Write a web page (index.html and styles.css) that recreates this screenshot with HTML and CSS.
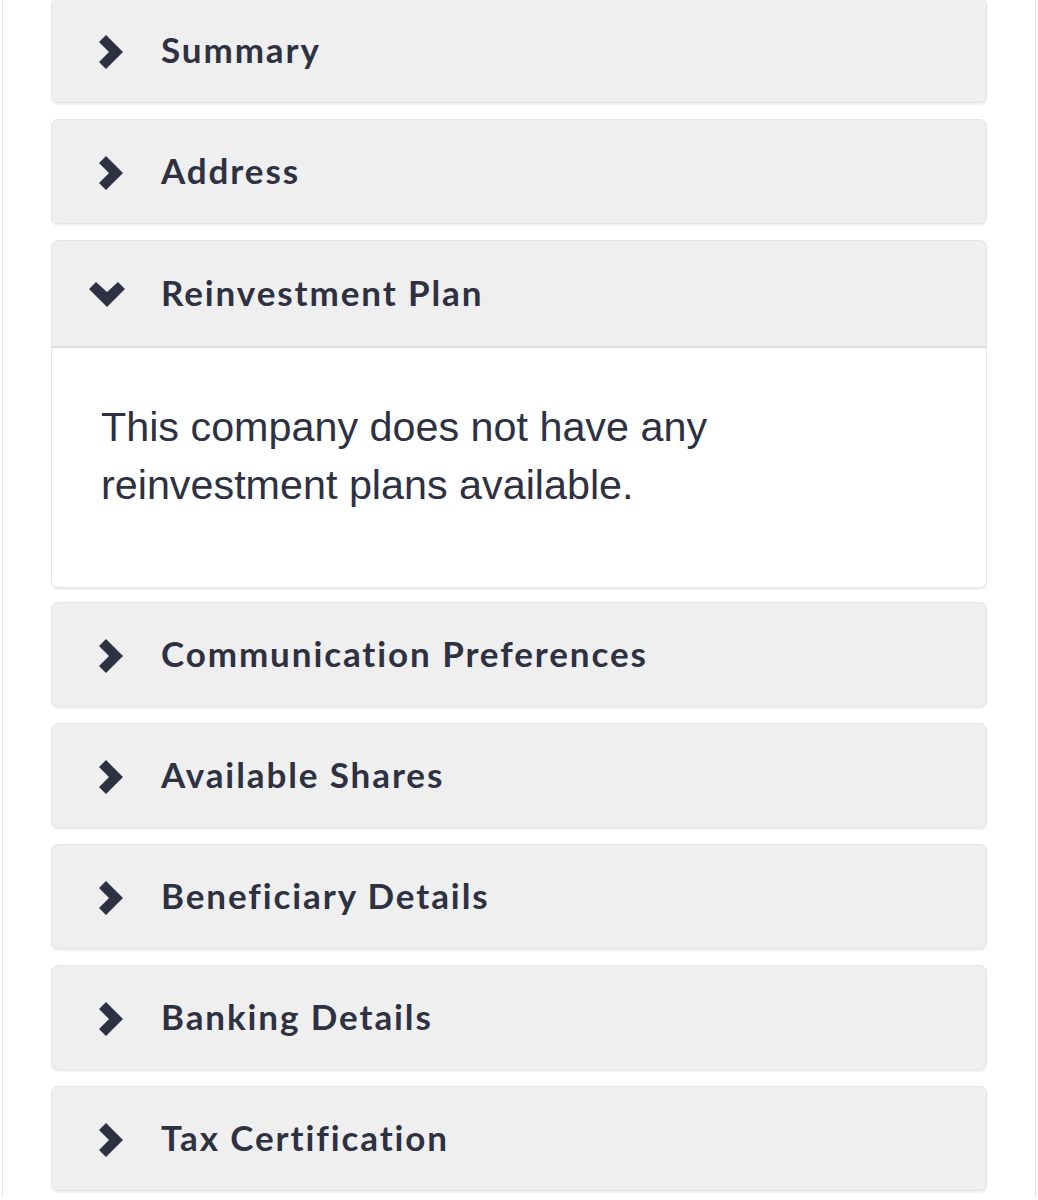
FILE: index.html
```html
<!DOCTYPE html>
<html>
  <head>
    <meta name="viewport" content="width=device-width, initial-scale=1" />
    <link rel="stylesheet" href="styles.css">
  </head>
  <body>
    <div class="page">
      <div class="panel first">
        <div class="panel-head">
          <span class="icon"><svg viewBox="0 0 36 36" width="36" height="36"><polygon points="10,9 17,2 34,19 17,36 10,29 20,19" /></svg></span>
          <span class="title">Summary</span>
        </div>
      </div>

      <div class="panel">
        <div class="panel-head">
          <span class="icon"><svg viewBox="0 0 36 36" width="36" height="36"><polygon points="10,9 17,2 34,19 17,36 10,29 20,19" /></svg></span>
          <span class="title">Address</span>
        </div>
      </div>

      <div class="panel open">
        <div class="panel-head">
          <span class="icon"><svg viewBox="0 0 36 36" width="36" height="36"><polygon points="0,13 7,6 18,16 29,6 36,13 18,31" /></svg></span>
          <span class="title">Reinvestment Plan</span>
        </div>
        <div class="panel-body">
          <p>This company does not have any reinvestment plans available.</p>
        </div>
      </div>

      <div class="panel">
        <div class="panel-head">
          <span class="icon"><svg viewBox="0 0 36 36" width="36" height="36"><polygon points="10,9 17,2 34,19 17,36 10,29 20,19" /></svg></span>
          <span class="title">Communication Preferences</span>
        </div>
      </div>

      <div class="panel">
        <div class="panel-head">
          <span class="icon"><svg viewBox="0 0 36 36" width="36" height="36"><polygon points="10,9 17,2 34,19 17,36 10,29 20,19" /></svg></span>
          <span class="title">Available Shares</span>
        </div>
      </div>

      <div class="panel">
        <div class="panel-head">
          <span class="icon"><svg viewBox="0 0 36 36" width="36" height="36"><polygon points="10,9 17,2 34,19 17,36 10,29 20,19" /></svg></span>
          <span class="title">Beneficiary Details</span>
        </div>
      </div>

      <div class="panel">
        <div class="panel-head">
          <span class="icon"><svg viewBox="0 0 36 36" width="36" height="36"><polygon points="10,9 17,2 34,19 17,36 10,29 20,19" /></svg></span>
          <span class="title">Banking Details</span>
        </div>
      </div>

      <div class="panel">
        <div class="panel-head">
          <span class="icon"><svg viewBox="0 0 36 36" width="36" height="36"><polygon points="10,9 17,2 34,19 17,36 10,29 20,19" /></svg></span>
          <span class="title">Tax Certification</span>
        </div>
      </div>
    </div>
  </body>
</html>
```

FILE: styles.css
```css
* {
  box-sizing: border-box;
}

body {
  margin: 0;
  background-color: white;
  font-family: Lato, "Open Sans", sans-serif;
  color: #2e3142;
}

/* outer column with thin side rules */
.page {
  width: 1034px;
  margin-left: 2px;
  min-height: 1200px;
  padding: 0 48px;
  border-left: 1px solid #e3e3e6;
  border-right: 1px solid #e3e3e6;
}

.panel {
  margin-bottom: 16px;
  border: 1px solid #e4e4e4;
  border-radius: 7px;
  background-color: #efefef;
  box-shadow: 0 2px 1px rgba(0, 0, 0, 0.06);
  overflow: hidden;
}

.panel.first {
  margin-top: -2px;
}

.panel.open {
  margin-bottom: 14px;
}

.panel-head {
  display: flex;
  align-items: center;
  height: 103px;
  padding-left: 37px;
}

.open .panel-head {
  height: 107px;
  border-bottom: 2px solid #dedede;
}

.icon {
  display: flex;
  width: 36px;
  height: 36px;
  margin-right: 36px;
}

.icon svg {
  fill: #2e3142;
}

.title {
  font-size: 35px;
  font-weight: 700;
  letter-spacing: 1.9px;
  margin-top: -3px;
}

.panel-body {
  background-color: white;
  height: 239px;
  padding: 50px 40px 0 49px;
}

.panel-body p {
  margin: 0;
  max-width: 700px;
  font-family: "Liberation Sans", Arial, sans-serif;
  font-size: 41.3px;
  line-height: 58px;
}
```
